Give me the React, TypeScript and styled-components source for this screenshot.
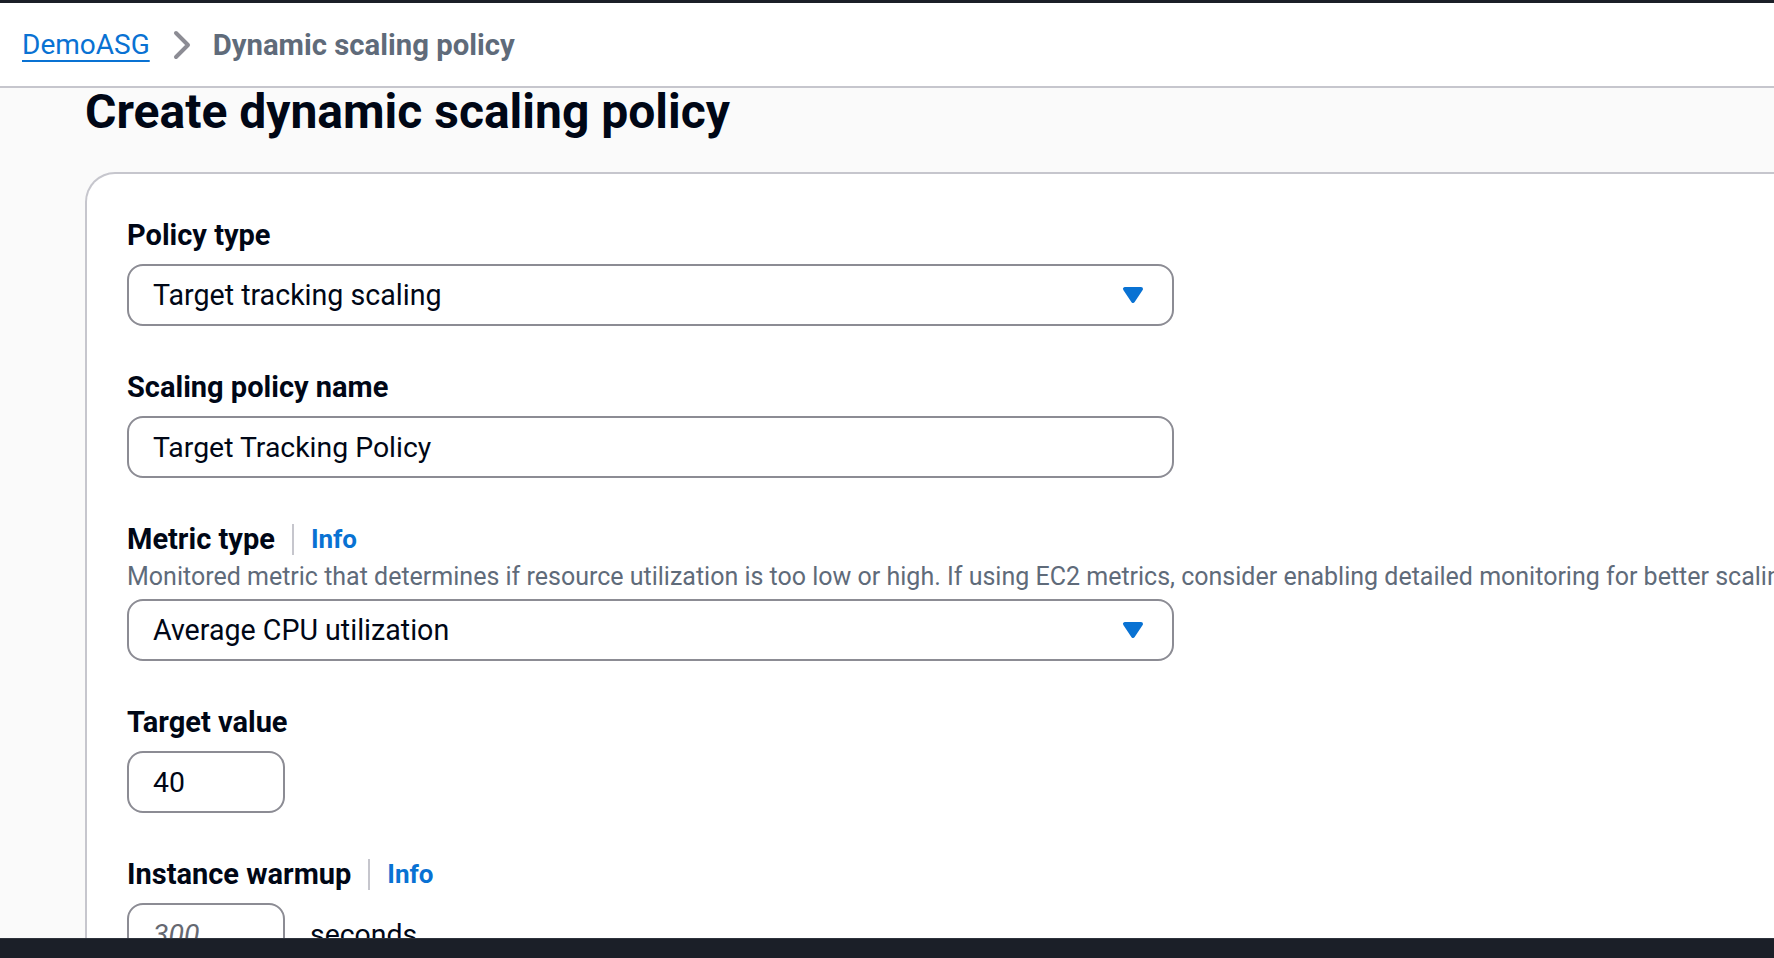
import React from 'react';
import styled, { createGlobalStyle } from 'styled-components';

const GlobalStyle = createGlobalStyle`
  html, body {
    margin: 0;
    padding: 0;
    height: 100%;
  }
  body {
    font-family: Roboto, "Liberation Sans", Arial, sans-serif;
    color: #000716;
    background: #fafafa;
    overflow: hidden;
  }
  #root {
    height: 100%;
  }
  * {
    box-sizing: border-box;
  }
`;

const Shell = styled.div`
  display: flex;
  flex-direction: column;
  height: 100vh;
  overflow: hidden;
  border-top: 3px solid #1b1f27;
`;

const BreadcrumbBar = styled.nav`
  display: flex;
  align-items: center;
  padding: 22px 0 21px 22px;
  background: #ffffff;
  border-bottom: 2px solid #c6c6cd;
  line-height: 40px;
  font-size: 28px;
`;

const CrumbLink = styled.a`
  color: #0972d3;
  text-decoration: underline;
  text-decoration-thickness: 2px;
  text-underline-offset: 6px;
  cursor: pointer;
`;

const CrumbSep = styled.span`
  display: inline-flex;
  width: 32px;
  height: 32px;
  margin: 0 15px 0 16px;
  color: #8c8c94;
`;

const CrumbCurrent = styled.span`
  color: #5f6b7a;
  font-weight: 700;
  font-size: 29.3px;
`;

const Main = styled.main`
  flex: 1;
  min-height: 0;
  padding-left: 85px;
  background: #fafafa;
`;

const Title = styled.h1`
  margin: 0 0 36px 0;
  font-size: 48px;
  line-height: 48px;
  font-weight: 700;
  color: #000716;
`;

const Card = styled.section`
  width: 1800px;
  background: #ffffff;
  border: 2px solid #c6c6cd;
  border-bottom: none;
  border-radius: 30px 30px 0 0;
  padding: 40px 40px 80px 40px;
  display: flex;
  flex-direction: column;
  gap: 40px;
`;

const Field = styled.div`
  display: flex;
  flex-direction: column;
`;

const LabelRow = styled.div<{ $tight?: boolean }>`
  display: flex;
  align-items: flex-start;
  height: 40px;
  margin-bottom: ${(p) => (p.$tight ? '3px' : '10px')};
`;

const Label = styled.label`
  font-size: 29px;
  line-height: 43px;
  font-weight: 700;
  color: #000716;
  white-space: nowrap;
`;

const LabelDivider = styled.span`
  align-self: center;
  width: 2px;
  height: 31px;
  background: #c6c6cd;
  margin: 2px 17px 0 17px;
`;

const InfoLink = styled.a`
  font-size: 26px;
  line-height: 43px;
  font-weight: 700;
  color: #0972d3;
  cursor: pointer;
`;

const Description = styled.div`
  font-size: 25px;
  line-height: 32px;
  color: #5f6b7a;
  white-space: nowrap;
  margin-bottom: 6px;
`;

const SelectBox = styled.div`
  width: 1047px;
  height: 62px;
  display: flex;
  align-items: center;
  justify-content: space-between;
  padding: 0 23px 0 24px;
  border: 2px solid #8c8c94;
  border-radius: 16px;
  background: #ffffff;
  font-size: 28.6px;
  color: #000716;
  cursor: pointer;
`;

const Caret = styled.span`
  display: inline-flex;
  width: 32px;
  height: 32px;
  color: #0972d3;
`;

const TextInput = styled.input<{ $width: number }>`
  width: ${(p) => p.$width}px;
  height: 62px;
  padding: 0 24px;
  border: 2px solid #8c8c94;
  border-radius: 16px;
  background: #ffffff;
  font-family: Roboto, "Liberation Sans", Arial, sans-serif;
  font-size: 28.4px;
  color: #000716;
  outline: none;
  &::placeholder {
    color: #656871;
    font-style: italic;
  }
`;

const InlineRow = styled.div`
  display: flex;
  align-items: center;
  gap: 25px;
`;

const Unit = styled.span`
  font-size: 28.4px;
  color: #000716;
`;

const Footer = styled.footer`
  position: relative;
  z-index: 1;
  height: 20px;
  flex-shrink: 0;
  background: #1b1f28;
  border-top: 1px solid #2e333c;
`;

const ChevronRight = () => (
  <svg width="32" height="32" viewBox="0 0 16 16" fill="none">
    <path d="M5 2l6 6-6 6" stroke="currentColor" strokeWidth="2" strokeLinejoin="round" strokeLinecap="round" />
  </svg>
);

const CaretDown = () => (
  <svg width="32" height="32" viewBox="0 0 16 16">
    <path d="M4 5h8l-4 6-4-6z" fill="currentColor" stroke="currentColor" strokeWidth="2" strokeLinejoin="round" />
  </svg>
);

export default function App() {
  return (
    <>
      <GlobalStyle />
      <Shell>
        <BreadcrumbBar>
          <CrumbLink>DemoASG</CrumbLink>
          <CrumbSep>
            <ChevronRight />
          </CrumbSep>
          <CrumbCurrent>Dynamic scaling policy</CrumbCurrent>
        </BreadcrumbBar>
        <Main>
          <Title>Create dynamic scaling policy</Title>
          <Card>
            <Field>
              <LabelRow>
                <Label>Policy type</Label>
              </LabelRow>
              <SelectBox>
                <span>Target tracking scaling</span>
                <Caret>
                  <CaretDown />
                </Caret>
              </SelectBox>
            </Field>
            <Field>
              <LabelRow>
                <Label>Scaling policy name</Label>
              </LabelRow>
              <TextInput $width={1047} readOnly value="Target Tracking Policy" />
            </Field>
            <Field>
              <LabelRow $tight>
                <Label>Metric type</Label>
                <LabelDivider />
                <InfoLink>Info</InfoLink>
              </LabelRow>
              <Description>
                Monitored metric that determines if resource utilization is too low or high. If using EC2 metrics, consider enabling detailed monitoring for better scaling performance.
              </Description>
              <SelectBox>
                <span>Average CPU utilization</span>
                <Caret>
                  <CaretDown />
                </Caret>
              </SelectBox>
            </Field>
            <Field>
              <LabelRow>
                <Label>Target value</Label>
              </LabelRow>
              <TextInput $width={158} readOnly value="40" />
            </Field>
            <Field>
              <LabelRow>
                <Label>Instance warmup</Label>
                <LabelDivider />
                <InfoLink>Info</InfoLink>
              </LabelRow>
              <InlineRow>
                <TextInput $width={158} readOnly placeholder="300" />
                <Unit>seconds</Unit>
              </InlineRow>
            </Field>
          </Card>
        </Main>
        <Footer />
      </Shell>
    </>
  );
}
